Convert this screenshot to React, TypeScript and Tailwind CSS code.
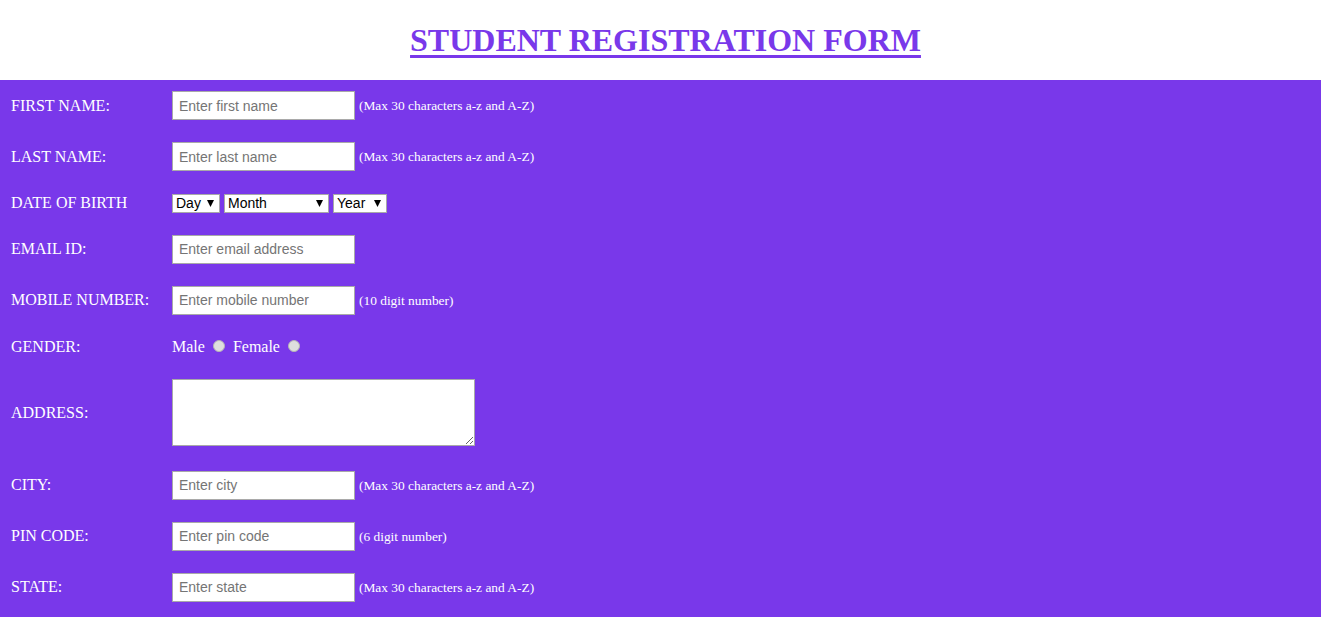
import React from "react";

const serif = { fontFamily: '"Liberation Serif", "Times New Roman", serif' };

const Hint = ({ text }: { text: string }) => (
  <span className="ml-[4px] translate-y-[1px] text-[13.4px] text-white" style={serif}>
    {text}
  </span>
);

const TextInput = ({ placeholder }: { placeholder: string }) => (
  <input
    type="text"
    placeholder={placeholder}
    className="h-[29px] w-[183px] border border-[#a9a9a9] bg-white px-[6px] font-['Liberation_Sans',Arial,sans-serif] text-[14px] text-black outline-none placeholder:text-[#757575]"
  />
);

const Select = ({ label, width }: { label: string; width: string }) => (
  <span className={`relative flex h-[19px] ${width}`}>
    <select className="h-[19px] w-full appearance-none border border-[#a9a9a9] bg-white pl-[3px] font-['Liberation_Sans',Arial,sans-serif] text-[14px] leading-[17px] text-black outline-none">
      <option>{label}</option>
    </select>
    <svg className="pointer-events-none absolute right-[6px] top-[6px]" width="7" height="7" viewBox="0 0 7 7">
      <path d="M0 0 H7 L3.5 7 Z" fill="#000" />
    </svg>
  </span>
);

const Row = ({ label, h, children }: { label: string; h: string; children: React.ReactNode }) => (
  <div className={`flex items-center ${h}`}>
    <div className="w-[172px] shrink-0 pl-[11px] text-[16px] text-white" style={serif}>
      {label}
    </div>
    <div className="flex items-center">{children}</div>
  </div>
);

export default function App() {
  return (
    <div className="min-h-screen bg-[#7938ea]" style={serif}>
      <div className="h-[80px] bg-white pl-[10px] pt-[22px] text-center">
        <h1 className="text-[32px] font-bold leading-[36px] text-[#7938ea] underline decoration-[3px] underline-offset-[4px]" style={serif}>
          STUDENT REGISTRATION FORM
        </h1>
      </div>
      <form>
        <Row label="FIRST NAME:" h="h-[51px]">
          <TextInput placeholder="Enter first name" />
          <Hint text="(Max 30 characters a-z and A-Z)" />
        </Row>
        <Row label="LAST NAME:" h="h-[51px]">
          <TextInput placeholder="Enter last name" />
          <Hint text="(Max 30 characters a-z and A-Z)" />
        </Row>
        <Row label="DATE OF BIRTH" h="h-[42px]">
          <div className="flex gap-[4px]">
            <Select label="Day" width="w-[48px]" />
            <Select label="Month" width="w-[105px]" />
            <Select label="Year" width="w-[54px]" />
          </div>
        </Row>
        <Row label="EMAIL ID:" h="h-[50px]">
          <TextInput placeholder="Enter email address" />
        </Row>
        <Row label="MOBILE NUMBER:" h="h-[52px]">
          <TextInput placeholder="Enter mobile number" />
          <Hint text="(10 digit number)" />
        </Row>
        <Row label="GENDER:" h="h-[42px]">
          <label className="flex items-center text-[16px] text-white" style={serif}>
            Male
            <input
              type="radio"
              name="gender"
              className="ml-[8px] mr-[8px] h-[12px] w-[12px] -translate-y-[1px] appearance-none rounded-full border border-[#b5b5b5] bg-[#dedede]"
            />
          </label>
          <label className="flex items-center text-[16px] text-white" style={serif}>
            Female
            <input
              type="radio"
              name="gender"
              className="ml-[8px] h-[12px] w-[12px] -translate-y-[1px] appearance-none rounded-full border border-[#b5b5b5] bg-[#dedede]"
            />
          </label>
        </Row>
        <Row label="ADDRESS:" h="h-[90px]">
          <textarea className="block h-[67px] w-[303px] -translate-y-[1px] border border-[#a9a9a9] bg-white outline-none" />
        </Row>
        <Row label="CITY:" h="h-[54px]">
          <TextInput placeholder="Enter city" />
          <Hint text="(Max 30 characters a-z and A-Z)" />
        </Row>
        <Row label="PIN CODE:" h="h-[48px]">
          <TextInput placeholder="Enter pin code" />
          <Hint text="(6 digit number)" />
        </Row>
        <Row label="STATE:" h="h-[54px]">
          <TextInput placeholder="Enter state" />
          <Hint text="(Max 30 characters a-z and A-Z)" />
        </Row>
      </form>
    </div>
  );
}
